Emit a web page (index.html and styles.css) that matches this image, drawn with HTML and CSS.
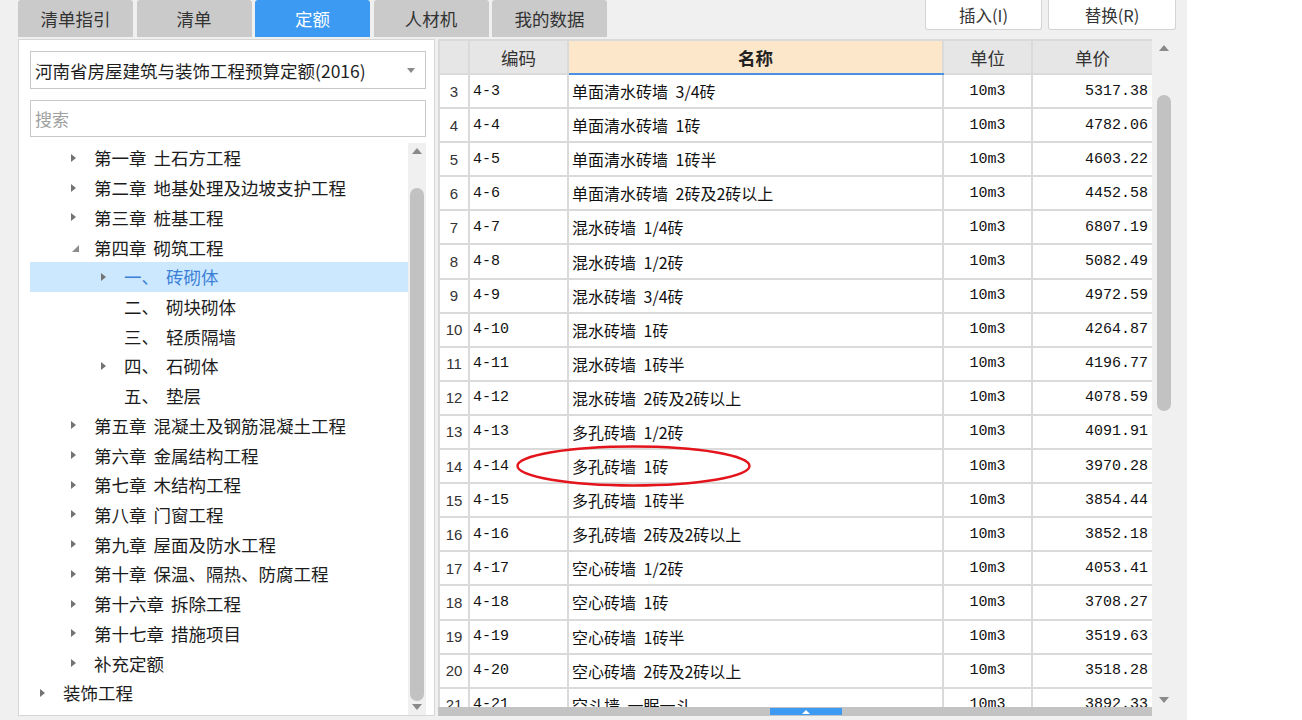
FILE: index.html
```html
<!DOCTYPE html>
<html lang="zh-CN">
<head>
<meta charset="utf-8">
<title>定额</title>
<link rel="stylesheet" href="styles.css">
</head>
<body>
<div class="app">
  <div class="topbar">
    <div class="tabs">
      <div class="tab">清单指引</div>
      <div class="tab">清单</div>
      <div class="tab active">定额</div>
      <div class="tab">人材机</div>
      <div class="tab">我的数据</div>
    </div>
    <div class="actions">
      <div class="btn btn-insert">插入(I)</div>
      <div class="btn btn-replace">替换(R)</div>
    </div>
  </div>

  <div class="main">
    <div class="left">
      <div class="select">
        <span class="select-text">河南省房屋建筑与装饰工程预算定额(2016)</span>
        <span class="select-arrow"></span>
      </div>
      <div class="search">搜索</div>
      <div class="tree-wrap">
        <div class="tree">
          <div class="node l1"><span class="tw"><i class="arr"></i></span>第一章 土石方工程</div>
          <div class="node l1"><span class="tw"><i class="arr"></i></span>第二章 地基处理及边坡支护工程</div>
          <div class="node l1"><span class="tw"><i class="arr"></i></span>第三章 桩基工程</div>
          <div class="node l1"><span class="tw"><i class="arr open"></i></span>第四章 砌筑工程</div>
          <div class="node l2 selected"><span class="tw"><i class="arr"></i></span>一、 砖砌体</div>
          <div class="node l2"><span class="tw"></span>二、 砌块砌体</div>
          <div class="node l2"><span class="tw"></span>三、 轻质隔墙</div>
          <div class="node l2"><span class="tw"><i class="arr"></i></span>四、 石砌体</div>
          <div class="node l2"><span class="tw"></span>五、 垫层</div>
          <div class="node l1"><span class="tw"><i class="arr"></i></span>第五章 混凝土及钢筋混凝土工程</div>
          <div class="node l1"><span class="tw"><i class="arr"></i></span>第六章 金属结构工程</div>
          <div class="node l1"><span class="tw"><i class="arr"></i></span>第七章 木结构工程</div>
          <div class="node l1"><span class="tw"><i class="arr"></i></span>第八章 门窗工程</div>
          <div class="node l1"><span class="tw"><i class="arr"></i></span>第九章 屋面及防水工程</div>
          <div class="node l1"><span class="tw"><i class="arr"></i></span>第十章 保温、隔热、防腐工程</div>
          <div class="node l1"><span class="tw"><i class="arr"></i></span>第十六章 拆除工程</div>
          <div class="node l1"><span class="tw"><i class="arr"></i></span>第十七章 措施项目</div>
          <div class="node l1"><span class="tw"><i class="arr"></i></span>补充定额</div>
          <div class="node l0"><span class="tw"><i class="arr"></i></span>装饰工程</div>
        </div>
        <div class="vscroll tree-scroll">
          <span class="sb-up"></span>
          <span class="sb-thumb"></span>
          <span class="sb-down"></span>
        </div>
      </div>
    </div>

    <div class="grid-panel">
      <div class="grid-area">
        <div class="grid">
          <table>
            <colgroup>
              <col class="c-no"><col class="c-code"><col class="c-name"><col class="c-unit"><col class="c-price">
            </colgroup>
            <thead>
              <tr><th></th><th>编码</th><th class="th-name">名称</th><th>单位</th><th>单价</th></tr>
            </thead>
            <tbody>
              <tr><td class="no">3</td><td class="code">4-3</td><td class="name">单面清水砖墙 3/4砖</td><td class="unit">10m3</td><td class="price">5317.38</td></tr>
              <tr><td class="no">4</td><td class="code">4-4</td><td class="name">单面清水砖墙 1砖</td><td class="unit">10m3</td><td class="price">4782.06</td></tr>
              <tr><td class="no">5</td><td class="code">4-5</td><td class="name">单面清水砖墙 1砖半</td><td class="unit">10m3</td><td class="price">4603.22</td></tr>
              <tr><td class="no">6</td><td class="code">4-6</td><td class="name">单面清水砖墙 2砖及2砖以上</td><td class="unit">10m3</td><td class="price">4452.58</td></tr>
              <tr><td class="no">7</td><td class="code">4-7</td><td class="name">混水砖墙 1/4砖</td><td class="unit">10m3</td><td class="price">6807.19</td></tr>
              <tr><td class="no">8</td><td class="code">4-8</td><td class="name">混水砖墙 1/2砖</td><td class="unit">10m3</td><td class="price">5082.49</td></tr>
              <tr><td class="no">9</td><td class="code">4-9</td><td class="name">混水砖墙 3/4砖</td><td class="unit">10m3</td><td class="price">4972.59</td></tr>
              <tr><td class="no">10</td><td class="code">4-10</td><td class="name">混水砖墙 1砖</td><td class="unit">10m3</td><td class="price">4264.87</td></tr>
              <tr><td class="no">11</td><td class="code">4-11</td><td class="name">混水砖墙 1砖半</td><td class="unit">10m3</td><td class="price">4196.77</td></tr>
              <tr><td class="no">12</td><td class="code">4-12</td><td class="name">混水砖墙 2砖及2砖以上</td><td class="unit">10m3</td><td class="price">4078.59</td></tr>
              <tr><td class="no">13</td><td class="code">4-13</td><td class="name">多孔砖墙 1/2砖</td><td class="unit">10m3</td><td class="price">4091.91</td></tr>
              <tr><td class="no">14</td><td class="code">4-14</td><td class="name">多孔砖墙 1砖</td><td class="unit">10m3</td><td class="price">3970.28</td></tr>
              <tr><td class="no">15</td><td class="code">4-15</td><td class="name">多孔砖墙 1砖半</td><td class="unit">10m3</td><td class="price">3854.44</td></tr>
              <tr><td class="no">16</td><td class="code">4-16</td><td class="name">多孔砖墙 2砖及2砖以上</td><td class="unit">10m3</td><td class="price">3852.18</td></tr>
              <tr><td class="no">17</td><td class="code">4-17</td><td class="name">空心砖墙 1/2砖</td><td class="unit">10m3</td><td class="price">4053.41</td></tr>
              <tr><td class="no">18</td><td class="code">4-18</td><td class="name">空心砖墙 1砖</td><td class="unit">10m3</td><td class="price">3708.27</td></tr>
              <tr><td class="no">19</td><td class="code">4-19</td><td class="name">空心砖墙 1砖半</td><td class="unit">10m3</td><td class="price">3519.63</td></tr>
              <tr><td class="no">20</td><td class="code">4-20</td><td class="name">空心砖墙 2砖及2砖以上</td><td class="unit">10m3</td><td class="price">3518.28</td></tr>
              <tr><td class="no">21</td><td class="code">4-21</td><td class="name">空斗墙 一眠一斗</td><td class="unit">10m3</td><td class="price">3892.33</td></tr>
            </tbody>
          </table>
        </div>
        <div class="vscroll grid-scroll">
          <span class="sb-up"></span>
          <span class="sb-thumb"></span>
          <span class="sb-down"></span>
        </div>
      </div>
      <div class="hbar">
        <div class="htrack"><span class="hthumb"><i class="hthumb-arrow"></i></span></div>
        <div class="hcorner"></div>
      </div>
    </div>
  </div>

  <svg class="mark" width="237" height="44" viewBox="0 0 237 44" aria-hidden="true">
    <ellipse cx="118.5" cy="22" rx="116" ry="19.5" fill="none" stroke="#e3141b" stroke-width="2.4"/>
  </svg>
</div>
</body>
</html>
```

FILE: styles.css
```css
html, body {
  margin: 0;
  padding: 0;
  background: #ffffff;
}

.app {
  position: relative;
  width: 1187px;
  height: 720px;
  background: #f0f0f0;
  font-family: "Noto Sans CJK SC", "Noto Sans", sans-serif;
  overflow: hidden;
}

/* ---------- top bar ---------- */
.topbar {
  display: flex;
  align-items: flex-start;
  height: 37px;
  padding: 0 11px 0 18px;
}

.tabs {
  display: flex;
  gap: 3.5px;
}

.tab {
  width: 115px;
  height: 37px;
  background: #cacaca;
  border-radius: 3px 3px 0 0;
  display: flex;
  align-items: center;
  justify-content: center;
  font-size: 17.5px;
  color: #333333;
}

.tab.active {
  background: #3d9af3;
  color: #ffffff;
}

.actions {
  margin-left: auto;
  display: flex;
  gap: 6px;
}

.btn {
  box-sizing: border-box;
  height: 30px;
  background: #ffffff;
  border: 1px solid #d3d3d3;
  border-top: none;
  border-radius: 0 0 3px 3px;
  display: flex;
  align-items: center;
  justify-content: center;
  font-size: 16.5px;
  color: #333333;
}

.btn-insert { width: 117px; }
.btn-replace { width: 128px; }

/* ---------- main ---------- */
.main {
  display: flex;
  gap: 3px;
  height: 677px;
  margin-top: 2px;
  padding-left: 18px;
}

.left {
  box-sizing: border-box;
  width: 417px;
  background: #ffffff;
  border: 1px solid #d6d6d6;
  padding: 11px 8px 0 11px;
  display: flex;
  flex-direction: column;
}

.select {
  box-sizing: border-box;
  height: 38px;
  border: 1px solid #c9c9c9;
  display: flex;
  align-items: center;
  padding: 0 10px 0 4px;
  font-size: 17.5px;
  color: #1e1e1e;
}

.select-arrow {
  margin-left: auto;
  width: 0;
  height: 0;
  border-left: 4px solid transparent;
  border-right: 4px solid transparent;
  border-top: 5px solid #8a8a8a;
}

.search {
  box-sizing: border-box;
  height: 37px;
  margin-top: 11px;
  border: 1px solid #c9c9c9;
  display: flex;
  align-items: center;
  padding-left: 4px;
  font-size: 17px;
  color: #a0a0a0;
}

.tree-wrap {
  flex: 1;
  display: flex;
  margin-top: 6px;
  min-height: 0;
}

.tree {
  flex: 1;
  overflow: hidden;
}

.node {
  height: 29.72px;
  display: flex;
  align-items: center;
  font-size: 17.5px;
  color: #1c1c1c;
  white-space: nowrap;
  word-spacing: 3px;
}

.node.l0 { padding-left: 10px; }
.node.l1 { padding-left: 41px; }
.node.l2 { padding-left: 71px; }

.node.selected {
  background: #cce8ff;
  color: #3b7fd6;
}

.tw {
  width: 23px;
  flex: none;
  display: flex;
  align-items: center;
}

.arr {
  width: 0;
  height: 0;
  border-left: 5px solid #737373;
  border-top: 4.5px solid transparent;
  border-bottom: 4.5px solid transparent;
}

.arr.open {
  border-left: 7px solid transparent;
  border-top: none;
  border-bottom: 7px solid #8c8c8c;
  margin-left: 1px;
  margin-top: 2px;
}

/* ---------- scrollbars ---------- */
.vscroll {
  flex: none;
  background: #f0f0f0;
  display: flex;
  flex-direction: column;
  align-items: center;
}

.sb-up {
  width: 0;
  height: 0;
  border-left: 5px solid transparent;
  border-right: 5px solid transparent;
  border-bottom: 6px solid #8a8a8a;
}

.sb-down {
  margin-top: auto;
  width: 0;
  height: 0;
  border-left: 5px solid transparent;
  border-right: 5px solid transparent;
  border-top: 6px solid #8a8a8a;
}

.sb-thumb {
  width: 14px;
  background: #c2c2c2;
  border-radius: 7px;
}

.tree-scroll {
  width: 18px;
  padding: 5px 0 5px;
}
.tree-scroll .sb-thumb {
  margin-top: 34px;
  height: 513px;
}

.grid-scroll {
  width: 24px;
  padding: 6px 0 4px;
}
.grid-scroll .sb-thumb {
  margin-top: 44px;
  height: 316px;
}

/* ---------- grid ---------- */
.grid-panel {
  width: 738px;
  display: flex;
  flex-direction: column;
}

.grid-area {
  display: flex;
  height: 668px;
}

.grid {
  width: 714px;
  overflow: hidden;
  background: #ffffff;
}

table {
  width: 714px;
  border-collapse: collapse;
  table-layout: fixed;
}

.c-no { width: 30px; }
.c-code { width: 99px; }
.c-name { width: 375px; }
.c-unit { width: 89px; }
.c-price { width: 121px; }

th, td {
  box-sizing: border-box;
  border: 2px solid #dadada;
  padding: 0;
  white-space: nowrap;
  overflow: hidden;
}

th {
  height: 34px;
  background: #e6e6e6;
  font-weight: normal;
  font-size: 17.5px;
  color: #333333;
  text-align: center;
}

th.th-name {
  background: #fde7cb;
  font-weight: bold;
  color: #222222;
  border-bottom: 2px solid #4a90e2;
}

td {
  height: 34.1px;
  color: #111111;
}

td.no {
  text-align: center;
  font-family: "Liberation Sans", sans-serif;
  font-size: 15px;
  color: #333333;
}

td.code {
  padding-left: 3px;
  font-family: "Liberation Mono", monospace;
  font-size: 15px;
}

td.name {
  padding-left: 3px;
  font-family: "Noto Sans CJK SC", sans-serif;
  font-size: 16px;
  word-spacing: 4px;
}

td.unit {
  text-align: center;
  font-family: "Liberation Mono", monospace;
  font-size: 15px;
}

td.price {
  text-align: right;
  padding-right: 4px;
  font-family: "Liberation Mono", monospace;
  font-size: 15px;
}

/* ---------- horizontal bar ---------- */
.hbar {
  display: flex;
  height: 9px;
}

.htrack {
  width: 714px;
  background: #c3c3c3;
  position: relative;
}

.hthumb {
  position: absolute;
  left: 332px;
  top: 1px;
  width: 72px;
  height: 7px;
  background: #3d9af3;
  display: flex;
  align-items: center;
  justify-content: center;
}

.hthumb-arrow {
  width: 0;
  height: 0;
  border-left: 4px solid transparent;
  border-right: 4px solid transparent;
  border-bottom: 4px solid #ffffff;
}

.hcorner {
  width: 24px;
  background: #f0f0f0;
}

/* ---------- annotation ---------- */
.mark {
  position: absolute;
  left: 515px;
  top: 444px;
}
```
